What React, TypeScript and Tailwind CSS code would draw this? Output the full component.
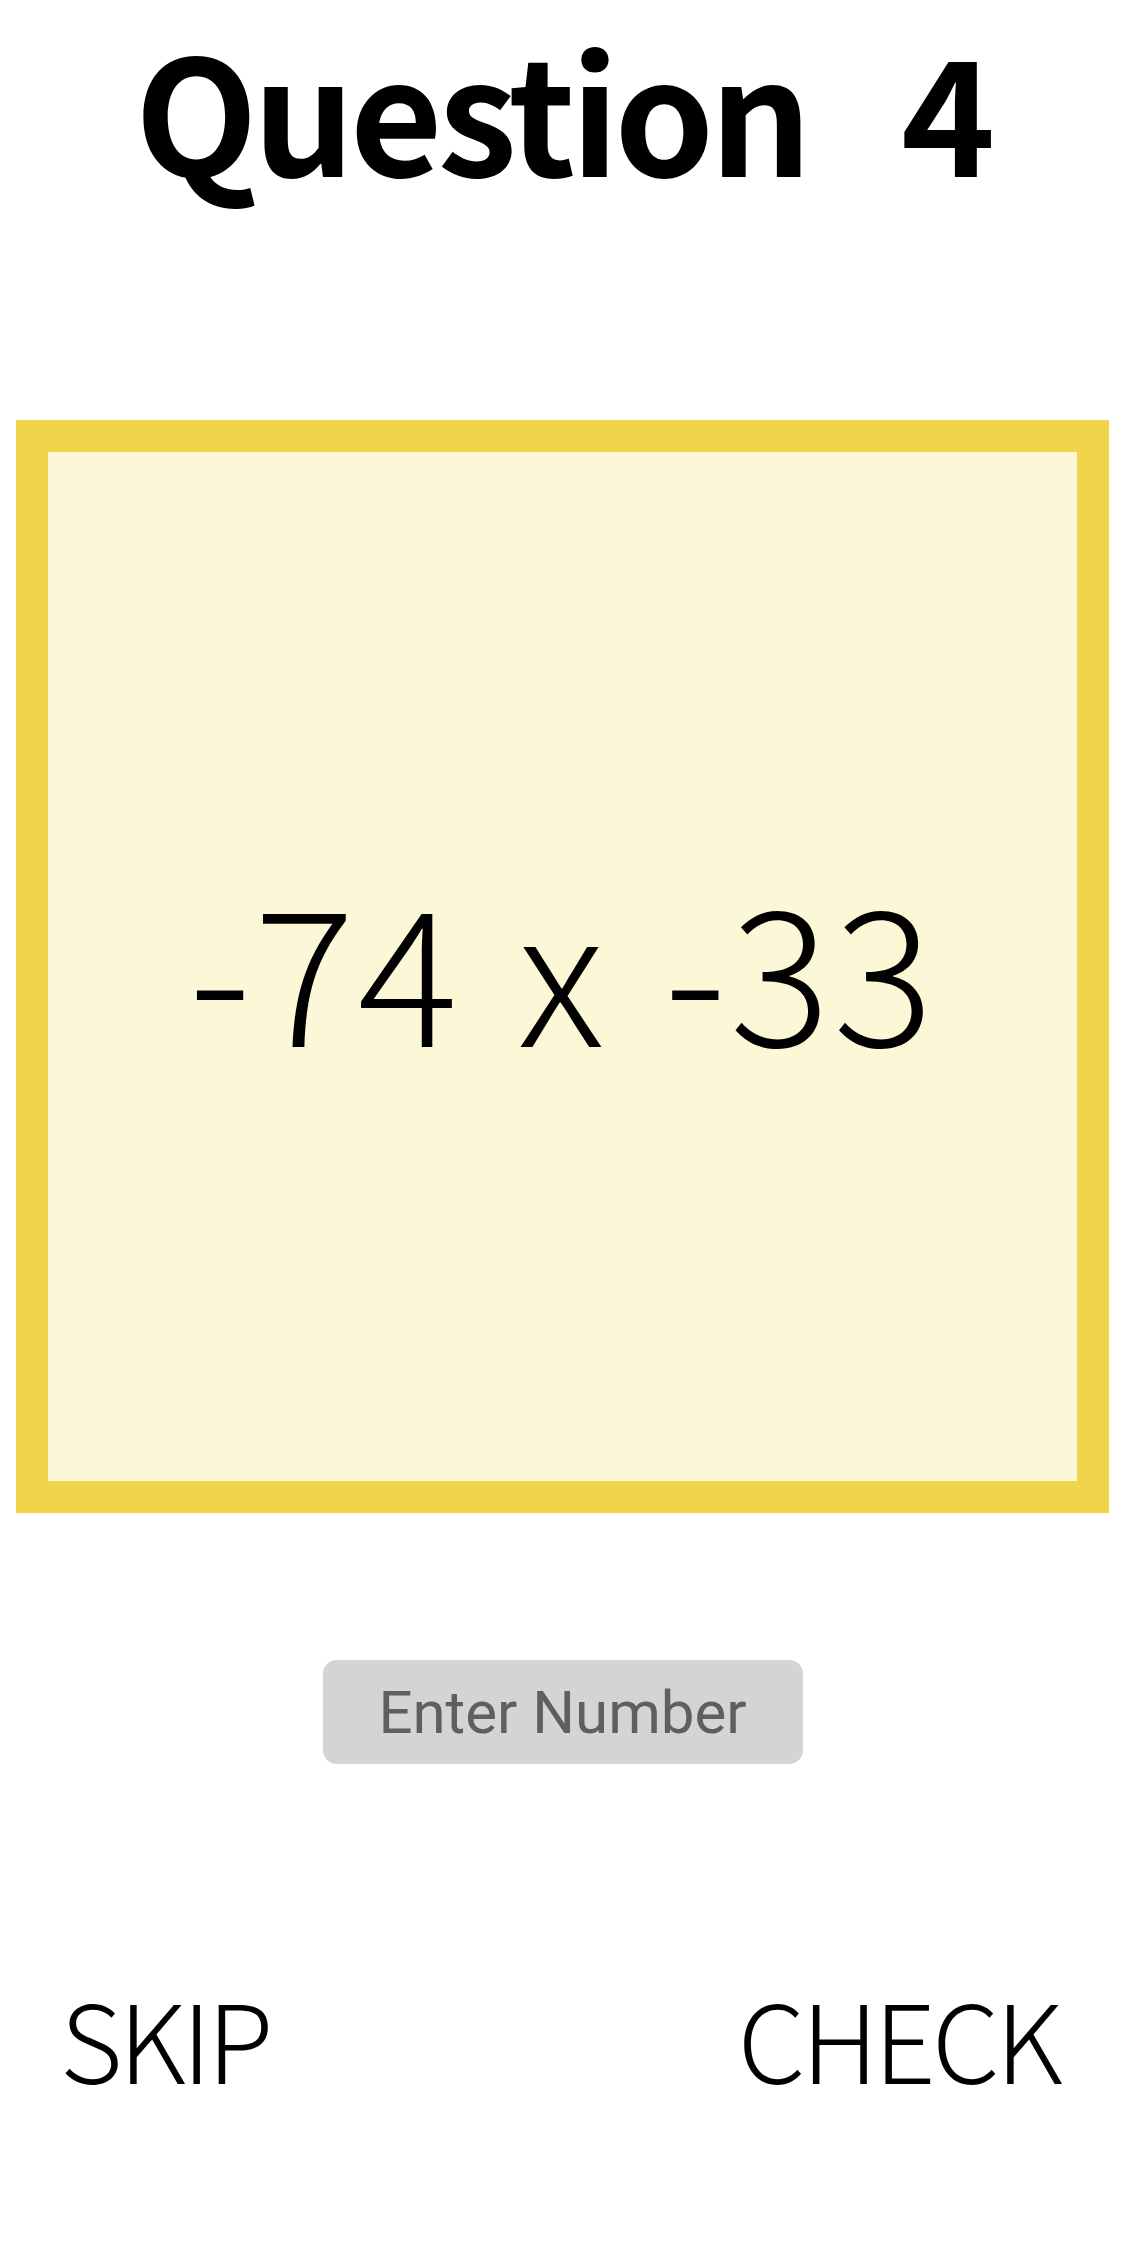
import { useState } from "react";

const cjk = "font-['Noto_Sans_CJK_JP','Noto_Sans',sans-serif]";

export default function App() {
  const [answer, setAnswer] = useState("");

  return (
    <div className="w-[1125px] h-[2259px] bg-white flex flex-col items-center text-black">
      <h1 className={`${cjk} mt-[7px] text-[160px] leading-[200px] font-bold tracking-[-5px] whitespace-pre`}>
        Question   4
      </h1>

      {/* question card */}
      <div className="mt-[213px] w-[1093px] h-[1093px] border-[32px] border-[#f2d44a] bg-[#fcf7d6] flex items-center justify-center">
        <span className={`${cjk} text-[188px] leading-none font-light tracking-[3px] [word-spacing:12px] whitespace-pre -mt-[4px]`}>
          -74 x -33
        </span>
      </div>

      <input
        type="text"
        value={answer}
        onChange={(e) => setAnswer(e.target.value)}
        placeholder="Enter Number"
        className="mt-[147px] w-[480px] h-[104px] rounded-[14px] bg-[#d4d4d4] text-center text-[60px] font-['Roboto',sans-serif] text-[#333] placeholder:text-[#5f5f5f] outline-none"
      />

      <div className="mt-[219px] w-full flex justify-between pl-[60px] pr-[66px]">
        <button className={`${cjk} text-[108px] leading-none font-light tracking-[-4px]`}>SKIP</button>
        <button className={`${cjk} text-[108px] leading-none font-light tracking-[-4px]`}>CHECK</button>
      </div>
    </div>
  );
}
